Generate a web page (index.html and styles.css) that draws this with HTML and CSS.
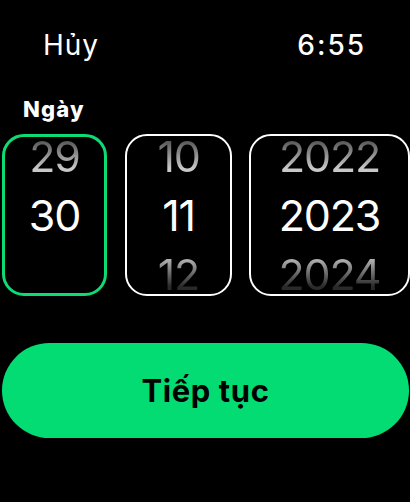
FILE: index.html
```html
<!DOCTYPE html>
<html lang="vi">
<head>
<meta charset="utf-8">
<title>Ngày</title>
<link rel="stylesheet" href="styles.css">
</head>
<body>
<div class="screen">
  <header class="top">
    <span class="cancel">Hủy</span>
    <span class="time">6:55</span>
  </header>
  <div class="label">Ngày</div>
  <div class="pickers">
    <div class="picker active">
      <div class="item prev">29</div>
      <div class="item cur">30</div>
      <div class="item next"></div>
    </div>
    <div class="picker">
      <div class="item prev">10</div>
      <div class="item cur">11</div>
      <div class="item next">12</div>
    </div>
    <div class="picker">
      <div class="item prev">2022</div>
      <div class="item cur">2023</div>
      <div class="item next">2024</div>
    </div>
  </div>
  <button class="continue">Tiếp tục</button>
</div>
</body>
</html>
```

FILE: styles.css
```css
html, body {
  margin: 0;
  padding: 0;
  background: #000;
}
body {
  width: 410px;
  height: 502px;
  overflow: hidden;
  font-family: "Inter", "Roboto", "Noto Sans", sans-serif;
  color: #fff;
}
.screen {
  display: flex;
  flex-direction: column;
}
.top {
  display: flex;
  justify-content: space-between;
  align-items: baseline;
  padding: 26px 44px 0 43px;
  height: 38px;
  line-height: 38px;
}
.cancel {
  font-size: 28px;
  font-weight: 400;
  letter-spacing: 1px;
}
.time {
  font-size: 28px;
  font-weight: 500;
  letter-spacing: 2px;
}
.label {
  margin-top: 32px;
  padding-left: 23px;
  font-size: 22px;
  font-weight: 800;
  line-height: 26px;
  letter-spacing: 1.2px;
}
.pickers {
  display: grid;
  grid-template-columns: 105px 107px 160px;
  column-gap: 18px;
  padding-left: 2px;
  margin-top: 12px;
  height: 162px;
}
.picker {
  box-sizing: border-box;
  height: 162px;
  border: 2px solid #fff;
  border-radius: 22px;
  overflow: hidden;
  display: flex;
  flex-direction: column;
  justify-content: center;
  align-items: center;
}
.picker:nth-child(3) { margin-left: -1px; }
.picker.active {
  border: 3px solid #0ddb74;
}
.item {
  flex: 0 0 59px;
  height: 59px;
  line-height: 59px;
  font-size: 43px;
  font-weight: 400;
  letter-spacing: -1.2px;
  text-align: center;
  width: 100%;
}
.item.prev {
  background: linear-gradient(to bottom, #5a5a5a 25%, #c8c8c8 70%);
  -webkit-background-clip: text;
  background-clip: text;
  color: transparent;
}
.item.next {
  background: linear-gradient(to bottom, #b0b0b0 25%, #2a2a2a 70%);
  -webkit-background-clip: text;
  background-clip: text;
  color: transparent;
}
.continue {
  margin: 47px 1px 0 2px;
  height: 95px;
  border: none;
  border-radius: 48px;
  background: #03dc72;
  color: #000;
  font-family: "Inter", "Roboto", sans-serif;
  font-size: 31px;
  font-weight: 700;
  letter-spacing: 0.6px;
  padding: 0;
}
```
